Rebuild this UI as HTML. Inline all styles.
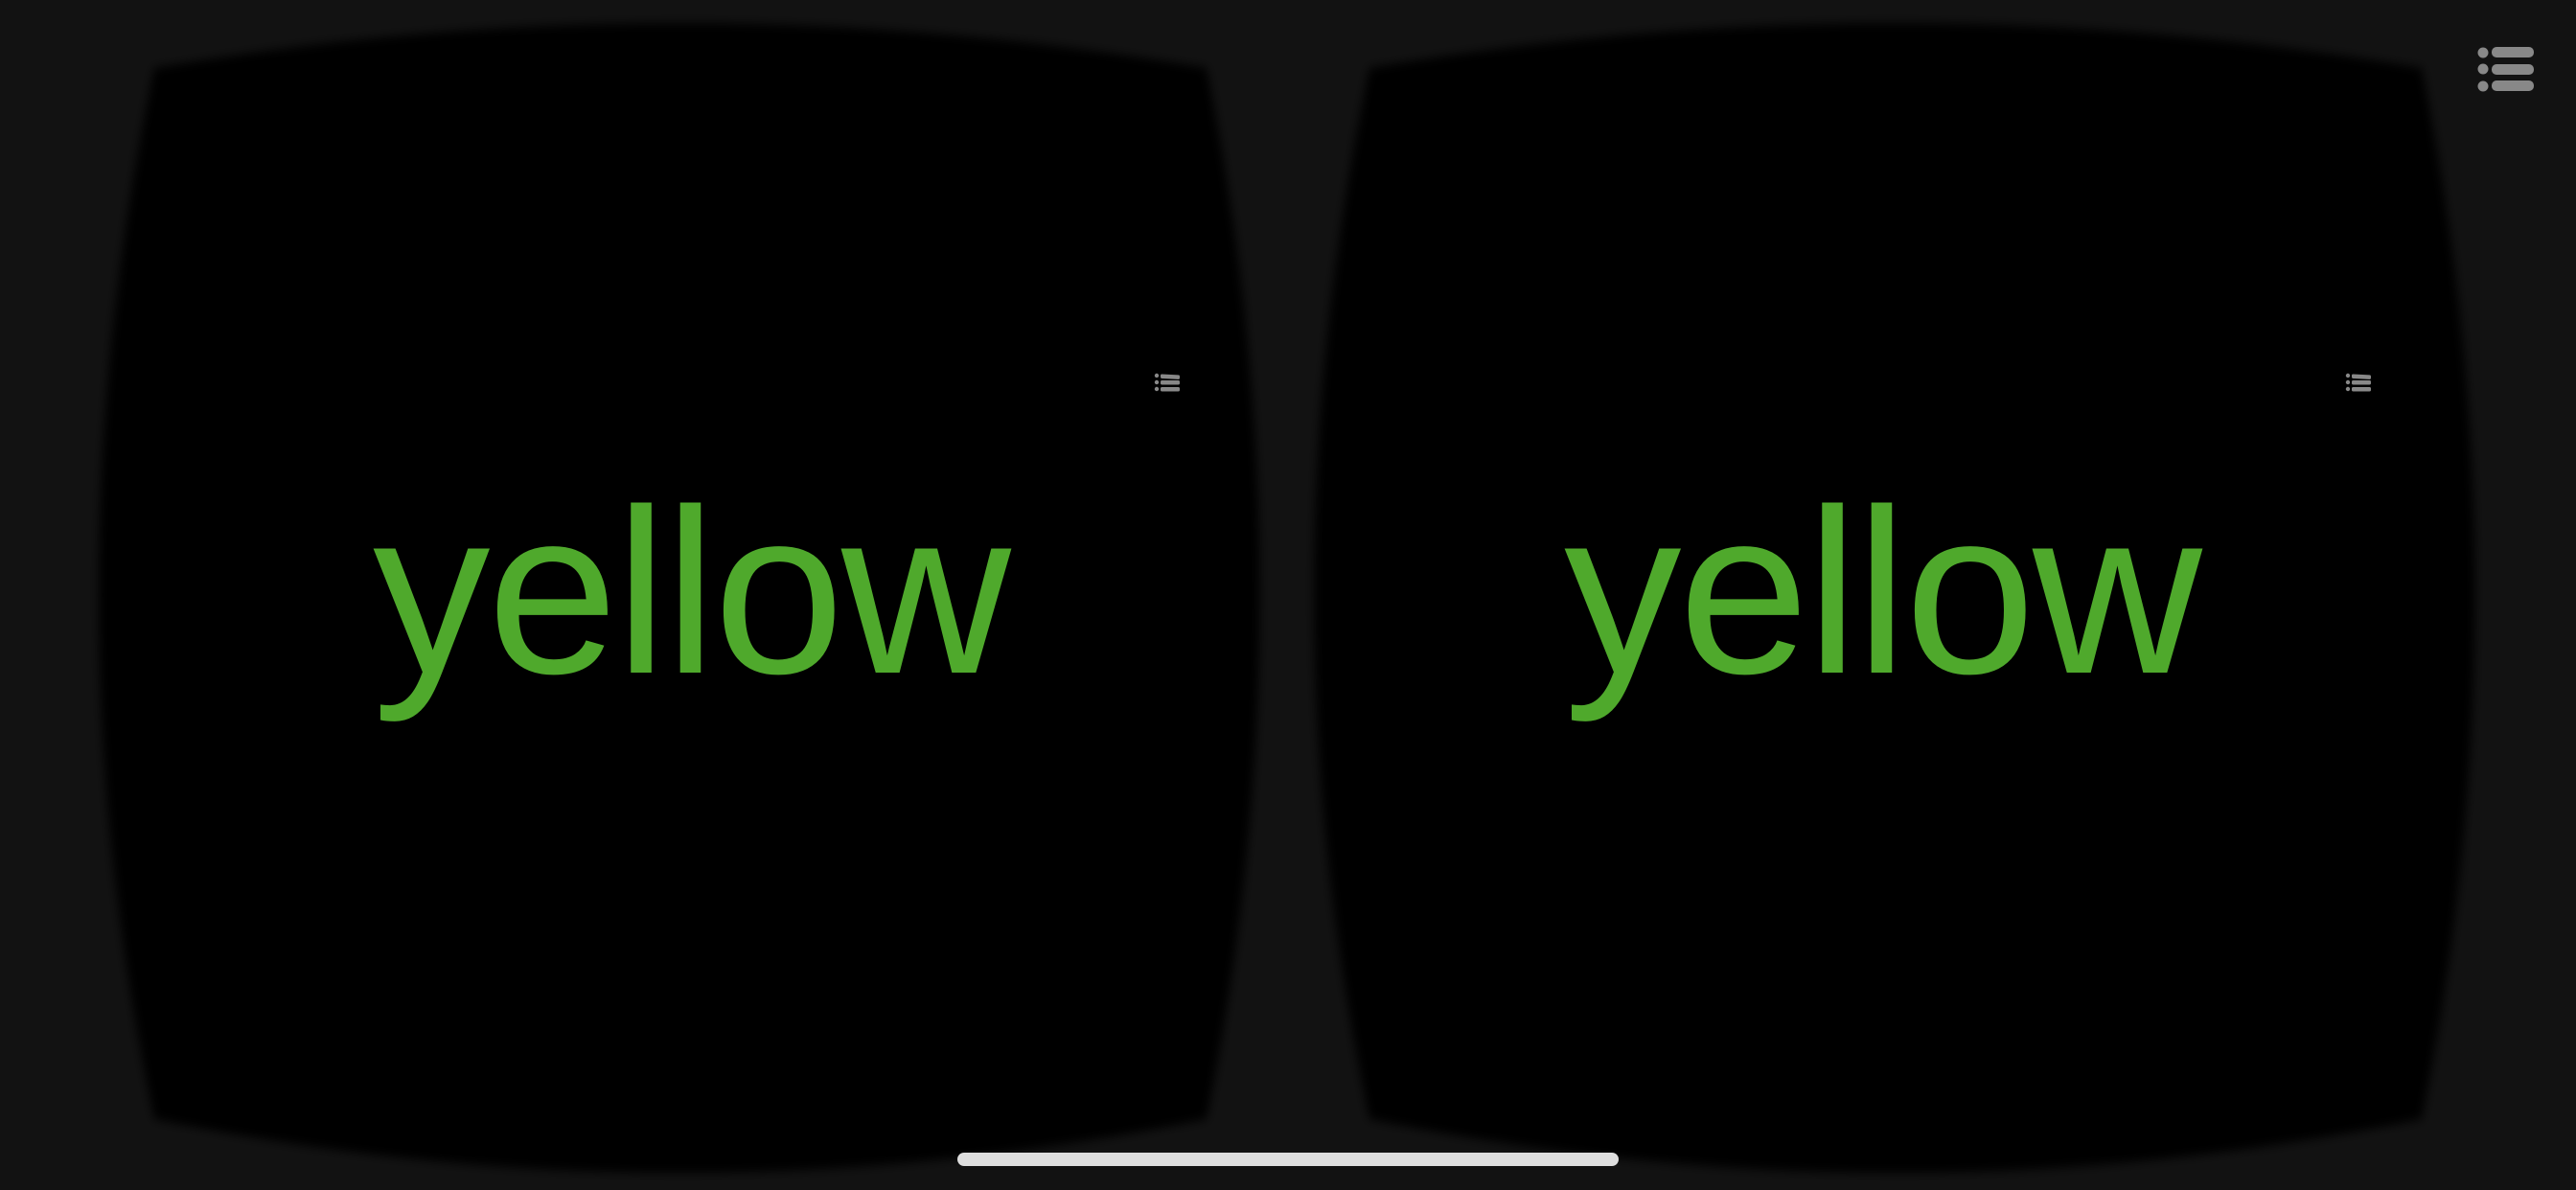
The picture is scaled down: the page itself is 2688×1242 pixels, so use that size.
<!DOCTYPE html>
<html><head><meta charset="utf-8"><style>
html,body{margin:0;padding:0;background:#121212;width:2688px;height:1242px;overflow:hidden}
svg{position:absolute;left:0;top:0}
.t{position:absolute;top:0;font-family:"Liberation Sans",Arial,sans-serif;font-size:245px;color:#4fa92c;line-height:1;white-space:nowrap;letter-spacing:-3px}
</style></head><body>
<svg width="2688" height="1242" viewBox="0 0 2688 1242">
<defs><filter id="b" x="-10%" y="-10%" width="120%" height="120%"><feGaussianBlur stdDeviation="5"/></filter>
<path id="lens" d="M161,71 Q710,-23 1259,71 Q1370,620 1259,1168 Q710,1280 161,1168 Q45,620 161,71 Z"/>
<g id="ic" fill="#888"><circle cx="3" cy="3" r="2.2"/><circle cx="3" cy="10" r="2.2"/><circle cx="3" cy="17" r="2.2"/><rect x="7" y="1" width="20" height="4.5" rx="1.5" transform="skewY(3)"/><rect x="7" y="8" width="20" height="4.5" rx="1.5"/><rect x="7" y="15" width="20" height="4.5" rx="1.5"/></g>
</defs>
<use href="#lens" fill="#000" filter="url(#b)"/>
<use href="#lens" fill="#000" filter="url(#b)" transform="translate(1268,0)"/>
<use href="#ic" transform="translate(1204,389)"/>
<use href="#ic" transform="translate(2447,389)"/>
<g fill="#888">
<circle cx="2591" cy="55" r="5.5"/><circle cx="2591" cy="72" r="5.5"/><circle cx="2591" cy="90" r="5.5"/>
<rect x="2600" y="49" width="44" height="11" rx="5"/><rect x="2600" y="67" width="44" height="11" rx="5"/><rect x="2600" y="84" width="44" height="11" rx="5"/>
</g>
<rect x="999" y="1203" width="690" height="14" rx="7" fill="#dedede"/>
</svg>
<div class="t" style="left:389px;top:495px">yellow</div>
<div class="t" style="left:1632px;top:495px">yellow</div>
</body></html>
